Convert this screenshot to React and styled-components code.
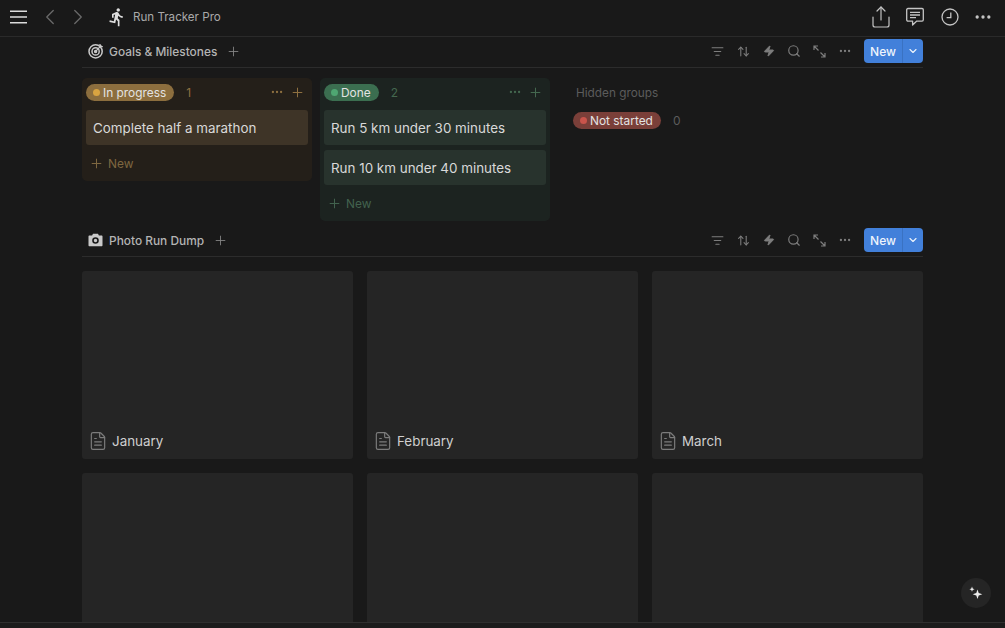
import React from 'react';
import styled, { createGlobalStyle } from 'styled-components';
import {
  ChevronLeft, ChevronRight, ChevronDown, Share, Ellipsis, Plus,
  Search, Zap, ArrowUpDown, ListFilter, FileText,
} from 'lucide-react';
import { MdDirectionsRun } from 'react-icons/md';

const GlobalStyle = createGlobalStyle`
  html, body {
    margin: 0;
    padding: 0;
    height: 100%;
    overflow: hidden;
    background: #191919;
  }
  * { box-sizing: border-box; }
`;

const Page = styled.div`
  position: relative;
  width: 1005px;
  height: 628px;
  display: flex;
  flex-direction: column;
  overflow: hidden;
  background: #191919;
  font-family: Inter, "Liberation Sans", sans-serif;
  color: #d4d4d4;
`;

const TopBar = styled.header`
  height: 37px;
  flex: none;
  display: flex;
  align-items: center;
  padding: 0 12px 2px 10px;
  border-bottom: 1px solid #2a2a2a;
`;

const TopLeft = styled.div`
  display: flex;
  align-items: center;
`;

const NavButton = styled.span`
  display: flex;
  margin-left: ${({ $ml }) => $ml}px;
  color: ${({ $color }) => $color};
`;

const AppTitle = styled.span`
  font-size: 11.6px;
  color: #a9a9a9;
  margin-left: 6px;
`;

const TopRight = styled.div`
  margin-left: auto;
  display: flex;
  align-items: center;
  color: #c4c4c4;
`;

const Main = styled.main`
  flex: 1;
  min-height: 0;
  padding: 0 82px;
  display: flex;
  flex-direction: column;
`;

const SectionHeader = styled.div`
  height: ${({ $height }) => $height}px;
  flex: none;
  display: flex;
  align-items: center;
  padding: 0 0 ${({ $pb }) => $pb}px 6px;
  border-bottom: 1px solid #2c2c2c;
`;

const SectionIcon = styled.span`
  display: flex;
  width: 16px;
  margin-right: 5px;
  color: #c9c9c9;
`;

const SectionTitle = styled.span`
  font-size: 11.9px;
  font-weight: 500;
  color: #b4b4b4;
`;

const AddView = styled.span`
  display: flex;
  margin-left: 9px;
  color: #858585;
`;

const Tools = styled.div`
  margin-left: auto;
  display: flex;
  align-items: center;
  color: #7d7d7d;
`;

const ToolSlot = styled.span`
  width: 25.5px;
  display: flex;
  justify-content: center;
`;

const NewButton = styled.div`
  margin-left: 6px;
  width: 59px;
  height: 24px;
  display: flex;
  border-radius: 4px;
  overflow: hidden;
  background: #4280da;
  color: #eef4fc;
  font-size: 12px;
  font-weight: 500;
`;

const NewLabel = styled.span`
  width: 39px;
  display: flex;
  align-items: center;
  justify-content: center;
  border-right: 1px solid #3a72c2;
`;

const NewCaret = styled.span`
  flex: 1;
  display: flex;
  align-items: center;
  justify-content: center;
`;

const Board = styled.section`
  display: flex;
  align-items: flex-start;
  gap: 8px;
  padding-top: 10px;
  height: 157px;
  flex: none;
`;

const Column = styled.div`
  width: 230px;
  padding: 4px 4px 0;
  border-radius: 5px;
  background: ${({ $bg }) => $bg};
`;

const GroupHead = styled.div`
  height: 20px;
  margin-bottom: 8px;
  display: flex;
  align-items: center;
  color: ${({ $accent }) => $accent};
`;

const Pill = styled.span`
  height: 17px;
  display: inline-flex;
  align-items: center;
  gap: 3px;
  padding: 0 8px 0 7px;
  border-radius: 9px;
  background: ${({ $bg }) => $bg};
  color: #e3e3e3;
  font-size: 11.9px;
  white-space: nowrap;
`;

const Dot = styled.i`
  width: 7px;
  height: 7px;
  border-radius: 50%;
  background: ${({ $color }) => $color};
`;

const Count = styled.span`
  margin-left: 12px;
  font-size: 12px;
  color: ${({ $color }) => $color};
`;

const GroupActions = styled.span`
  margin-left: auto;
  display: flex;
  align-items: center;
  gap: 6px;
  margin-right: 3px;
`;

const TaskCard = styled.div`
  height: 35px;
  margin-bottom: 5px;
  padding-left: 7px;
  display: flex;
  align-items: center;
  border-radius: 3px;
  background: ${({ $bg }) => $bg};
  color: #d9d9d9;
  font-size: 13.4px;
`;

const NewRow = styled.div`
  height: 36px;
  margin-top: -5px;
  padding-left: 3px;
  display: flex;
  align-items: center;
  gap: 4px;
  font-size: 11.9px;
  color: ${({ $color }) => $color};
`;

const Hidden = styled.div`
  margin-left: 14px;
  padding-top: 6px;
`;

const HiddenTitle = styled.div`
  padding-left: 4px;
  height: 18px;
  display: flex;
  align-items: center;
  font-size: 11.8px;
  color: #5c5c5c;
`;

const HiddenRow = styled.div`
  margin-top: 10px;
  margin-left: 1px;
  display: flex;
  align-items: center;
`;

const Gallery = styled.section`
  margin-top: 14px;
  display: grid;
  grid-template-columns: repeat(3, 271px);
  grid-auto-rows: 188px;
  gap: 14px;
`;

const PageCard = styled.article`
  border-radius: 3px;
  background: #252525;
  display: flex;
  align-items: flex-end;
  padding: 0 0 8px 6px;
`;

const CardTitle = styled.span`
  display: flex;
  align-items: center;
  gap: 4px;
  height: 21px;
  font-size: 13.4px;
  color: #cfcfcf;
`;

const CardIcon = styled.span`
  display: flex;
  color: #7c7c7c;
`;

const BottomLine = styled.div`
  flex: none;
  height: 6px;
  border-top: 1px solid #2f2f2f;
  background: #1c1c1c;
`;

const AiButton = styled.button`
  position: absolute;
  right: 14px;
  top: 578px;
  width: 30px;
  height: 30px;
  padding: 0;
  display: flex;
  align-items: center;
  justify-content: center;
  border: none;
  border-radius: 50%;
  background: #252525;
`;

const TargetIcon = () => (
  <svg width="16" height="16" viewBox="0 0 16 16" fill="none" stroke="currentColor" strokeWidth="1.5">
    <circle cx="7.6" cy="8.4" r="6.6" />
    <circle cx="7.6" cy="8.4" r="3.6" />
    <circle cx="7.6" cy="8.4" r="1" fill="currentColor" />
    <path d="M7.6 8.4 13.4 2.4M12 1v2.6h2.8" strokeWidth="1.3" />
  </svg>
);

const CameraIcon = () => (
  <svg width="15" height="14" viewBox="0 0 15 14">
    <path
      fill="currentColor"
      fillRule="evenodd"
      d="M1.5 2.4h2.6L5 .8h5l.9 1.6h2.6c.6 0 1 .4 1 1v8.9c0 .6-.4 1-1 1h-12c-.6 0-1-.4-1-1V3.4c0-.6.4-1 1-1ZM7.5 4.2a3.3 3.3 0 1 0 0 6.6 3.3 3.3 0 0 0 0-6.6Zm0 1.6a1.7 1.7 0 1 1 0 3.4 1.7 1.7 0 0 1 0-3.4Z"
    />
  </svg>
);

const HamburgerIcon = () => (
  <svg width="17" height="14" viewBox="0 0 17 14" stroke="#dcdcdc" strokeWidth="1.5">
    <path d="M0 1.2h17M0 7h17M0 12.8h17" />
  </svg>
);

const ChatIcon = () => (
  <svg width="20" height="20" viewBox="0 0 20 20" fill="none" stroke="currentColor" strokeWidth="1.3" strokeLinejoin="round">
    <path d="M3 1.5h14c.8 0 1.3.5 1.3 1.3v10c0 .8-.5 1.3-1.3 1.3h-5.2L7.6 18v-3.9H3c-.8 0-1.3-.5-1.3-1.3v-10c0-.8.5-1.3 1.3-1.3Z" />
    <path d="M5 5.3h10M5 8h10M5 10.7h6" />
  </svg>
);

const HistoryIcon = () => (
  <svg width="18" height="18" viewBox="0 0 18 18" fill="none" stroke="currentColor" strokeWidth="1.3">
    <circle cx="9" cy="9" r="8" />
    <path d="M9.8 4.6v5H5.6" />
  </svg>
);

const ExpandIcon = () => (
  <svg width="13" height="13" viewBox="0 0 13 13" fill="none" stroke="currentColor" strokeWidth="1.2">
    <path d="M1 5V1h4M1 1l4.5 4.5M12 8v4H8M12 12 7.5 7.5" />
  </svg>
);

const SparkleIcon = () => (
  <svg width="14" height="14" viewBox="0 0 14 14" fill="#ececec">
    <path d="M8.5 3.4 9.7 7l3.6 1.2-3.6 1.2-1.2 3.6-1.2-3.6L3.7 8.2 7.3 7Z" />
    <path d="M3 .6 3.7 2.5l1.9.7-1.9.7L3 5.8l-.7-1.9L.4 3.2l1.9-.7Z" />
  </svg>
);

const toolIcons = [
  <ListFilter key="filter" size={13} />,
  <ArrowUpDown key="sort" size={13} />,
  <Zap key="bolt" size={12} fill="currentColor" />,
  <Search key="search" size={14} />,
  <ExpandIcon key="expand" />,
  <Ellipsis key="more" size={14} />,
];

const Toolbar = () => (
  <Tools>
    {toolIcons.map((icon) => (
      <ToolSlot key={icon.key}>{icon}</ToolSlot>
    ))}
    <NewButton>
      <NewLabel>New</NewLabel>
      <NewCaret><ChevronDown size={12} strokeWidth={2.2} /></NewCaret>
    </NewButton>
  </Tools>
);

const columns = [
  {
    name: 'In progress',
    count: 1,
    bg: '#241f19',
    pill: '#8c6e3e',
    dot: '#d9a441',
    accent: '#8e7040',
    dim: '#7e6740',
    card: '#3e3427',
    tasks: ['Complete half a marathon'],
  },
  {
    name: 'Done',
    count: 2,
    bg: '#1c2320',
    pill: '#3b6e50',
    dot: '#4fa672',
    accent: '#44684f',
    dim: '#42624e',
    card: '#28332d',
    tasks: ['Run 5 km under 30 minutes', 'Run 10 km under 40 minutes'],
  },
];

const months = ['January', 'February', 'March', '', '', ''];

export default function App() {
  return (
    <Page>
      <GlobalStyle />
      <TopBar>
        <TopLeft>
          <NavButton $ml={0}><HamburgerIcon /></NavButton>
          <NavButton $ml={10} $color="#6a6a6a"><ChevronLeft size={26} strokeWidth={1.2} /></NavButton>
          <NavButton $ml={2} $color="#6a6a6a"><ChevronRight size={26} strokeWidth={1.2} /></NavButton>
          <NavButton $ml={16} $color="#dedede"><MdDirectionsRun size={20} /></NavButton>
          <AppTitle>Run Tracker Pro</AppTitle>
        </TopLeft>
        <TopRight>
          <NavButton $ml={0}><Share size={24} strokeWidth={1.2} /></NavButton>
          <NavButton $ml={12}><ChatIcon /></NavButton>
          <NavButton $ml={16}><HistoryIcon /></NavButton>
          <NavButton $ml={14}><Ellipsis size={20} strokeWidth={2} /></NavButton>
        </TopRight>
      </TopBar>

      <Main>
        <SectionHeader $height={31} $pb={2}>
          <SectionIcon><TargetIcon /></SectionIcon>
          <SectionTitle>Goals &amp; Milestones</SectionTitle>
          <AddView><Plus size={15} strokeWidth={1.4} /></AddView>
          <Toolbar />
        </SectionHeader>

        <Board>
          {columns.map((col) => (
            <Column key={col.name} $bg={col.bg}>
              <GroupHead $accent={col.accent}>
                <Pill $bg={col.pill}>
                  <Dot $color={col.dot} />
                  {col.name}
                </Pill>
                <Count $color={col.accent}>{col.count}</Count>
                <GroupActions>
                  <Ellipsis size={14} />
                  <Plus size={15} strokeWidth={1.6} />
                </GroupActions>
              </GroupHead>
              {col.tasks.map((task) => (
                <TaskCard key={task} $bg={col.card}>{task}</TaskCard>
              ))}
              <NewRow $color={col.dim}>
                <Plus size={15} strokeWidth={1.6} />
                New
              </NewRow>
            </Column>
          ))}
          <Hidden>
            <HiddenTitle>Hidden groups</HiddenTitle>
            <HiddenRow>
              <Pill $bg="#7a3f39">
                <Dot $color="#c9544b" />
                Not started
              </Pill>
              <Count $color="#5c5c5c">0</Count>
            </HiddenRow>
          </Hidden>
        </Board>

        <SectionHeader $height={32} $pb={1}>
          <SectionIcon><CameraIcon /></SectionIcon>
          <SectionTitle>Photo Run Dump</SectionTitle>
          <AddView><Plus size={15} strokeWidth={1.4} /></AddView>
          <Toolbar />
        </SectionHeader>

        <Gallery>
          {months.map((month, i) => (
            <PageCard key={i}>
              {month && (
                <CardTitle>
                  <CardIcon><FileText size={20} strokeWidth={1.4} /></CardIcon>
                  {month}
                </CardTitle>
              )}
            </PageCard>
          ))}
        </Gallery>
      </Main>

      <BottomLine />
      <AiButton aria-label="Ask AI"><SparkleIcon /></AiButton>
    </Page>
  );
}
